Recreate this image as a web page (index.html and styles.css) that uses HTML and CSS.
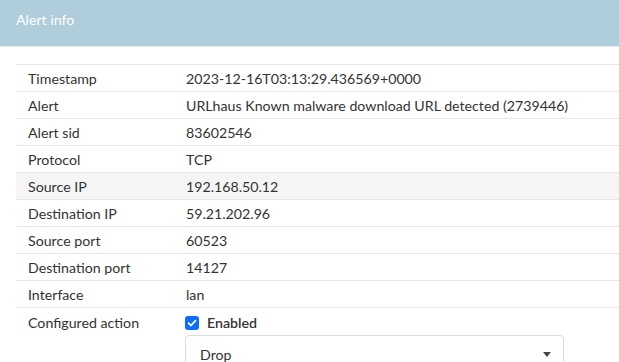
FILE: index.html
```html
<!DOCTYPE html>
<html lang="en">
<head>
  <meta charset="UTF-8" />
  <title>Alert info</title>
  <link rel="stylesheet" href="styles.css">
</head>
<body>
  <div class="panel-heading">Alert info</div>

  <div class="panel-body">
    <table class="info-table">
      <tr><td class="label">Timestamp</td><td>2023-12-16T03:13:29.436569+0000</td></tr>
      <tr><td class="label">Alert</td><td>URLhaus Known malware download URL detected (2739446)</td></tr>
      <tr><td class="label">Alert sid</td><td>83602546</td></tr>
      <tr><td class="label">Protocol</td><td>TCP</td></tr>
      <tr class="hover"><td class="label">Source IP</td><td>192.168.50.12</td></tr>
      <tr><td class="label">Destination IP</td><td>59.21.202.96</td></tr>
      <tr><td class="label">Source port</td><td>60523</td></tr>
      <tr><td class="label">Destination port</td><td>14127</td></tr>
      <tr><td class="label">Interface</td><td>lan</td></tr>
      <tr class="action-row">
        <td class="label">Configured action</td>
        <td>
          <label class="check">
            <span class="box">
              <svg width="10" height="10" viewBox="0 0 10 10"><path d="M1.6 5.2 L4 7.5 L8.5 2.6" fill="none" stroke="#fff" stroke-width="1.8" stroke-linecap="round" stroke-linejoin="round"/></svg>
            </span>
            Enabled
          </label>
          <div class="select">
            <span>Drop</span>
            <span class="caret"></span>
          </div>
        </td>
      </tr>
    </table>
  </div>
</body>
</html>
```

FILE: styles.css
```css
body {
  margin: 0;
  font-family: 'Lato', 'Liberation Sans', sans-serif;
  font-size: 14.2px;
  color: #333;
  background: #fff;
  overflow: hidden;
}

.panel-heading {
  height: 46px;
  line-height: 40px;
  padding-left: 16px;
  background: #afcddb;
  color: #fff;
  border-bottom: 1px solid #e4e9ec;
}

.panel-body {
  padding: 17px 0 0 16px;
}

.info-table {
  width: 100%;
  border-collapse: collapse;
  border-top: 1px solid #e6e6e6;
}

.info-table td {
  height: 26px;
  padding: 0 12px;
  border-bottom: 1px solid #e6e6e6;
  vertical-align: middle;
  white-space: nowrap;
}

.info-table td.label {
  width: 134px;
}

.info-table tr.hover td {
  background: #f5f5f5;
}

.action-row td {
  vertical-align: top;
  padding-top: 6px;
  border-bottom: none;
}

.check {
  display: flex;
  align-items: center;
  gap: 8px;
  margin-left: -1px;
  font-weight: 600;
  color: #333;
}

.box {
  width: 14px;
  height: 14px;
  border-radius: 3px;
  background: #0d6efd;
  display: flex;
  align-items: center;
  justify-content: center;
}

.select {
  margin: 4px 0 0 -1px;
  width: 349px;
  height: 36px;
  padding: 0 14px;
  border: 1px solid #dcdcdc;
  border-radius: 4px;
  display: flex;
  align-items: center;
  justify-content: space-between;
}

.caret {
  width: 0;
  height: 0;
  border-left: 4px solid transparent;
  border-right: 4px solid transparent;
  border-top: 5px solid #444;
  margin-right: -2px;
}
```
